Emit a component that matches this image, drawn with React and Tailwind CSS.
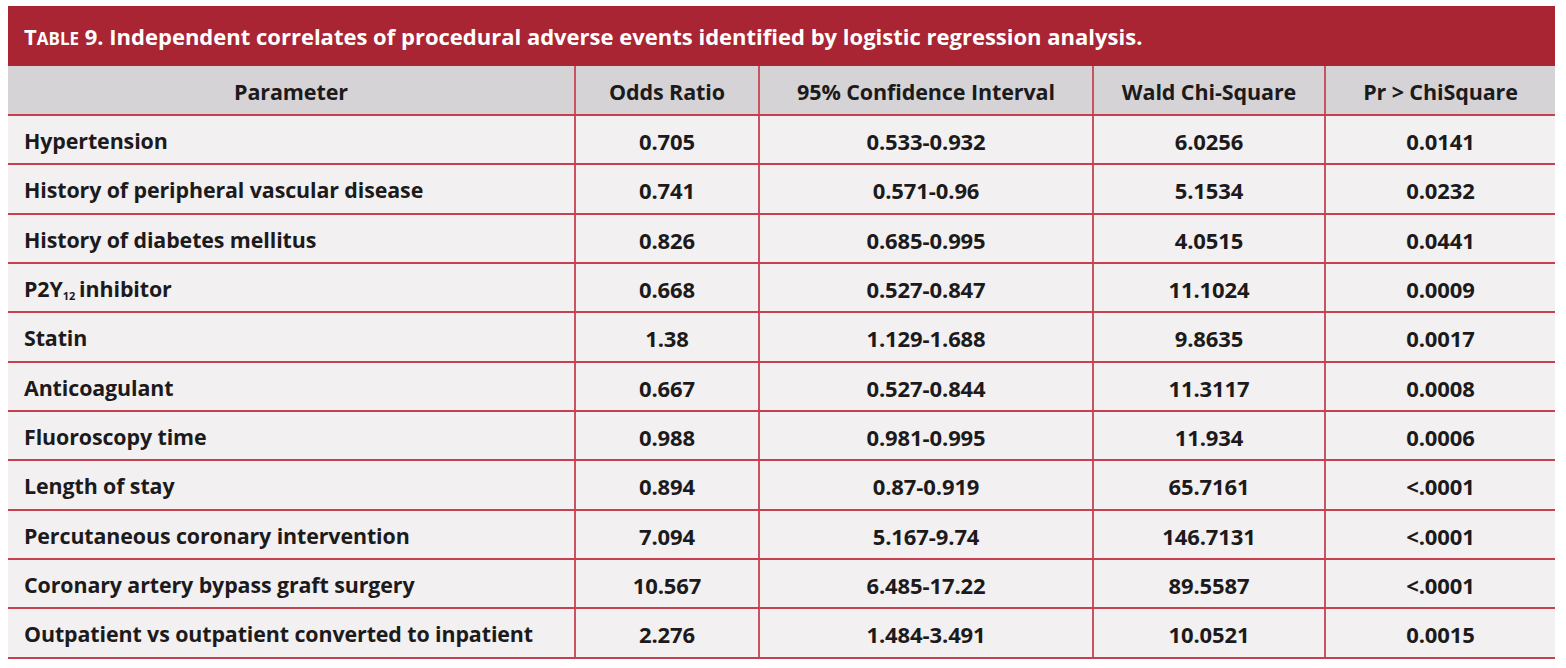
import React from "react";

const cols = "grid grid-cols-[568px_184px_334px_232px_229px]";

const rows = [
  ["Hypertension", "0.705", "0.533-0.932", "6.0256", "0.0141"],
  ["History of peripheral vascular disease", "0.741", "0.571-0.96", "5.1534", "0.0232"],
  ["History of diabetes mellitus", "0.826", "0.685-0.995", "4.0515", "0.0441"],
  ["P2Y12", "0.668", "0.527-0.847", "11.1024", "0.0009"],
  ["Statin", "1.38", "1.129-1.688", "9.8635", "0.0017"],
  ["Anticoagulant", "0.667", "0.527-0.844", "11.3117", "0.0008"],
  ["Fluoroscopy time", "0.988", "0.981-0.995", "11.934", "0.0006"],
  ["Length of stay", "0.894", "0.87-0.919", "65.7161", "<.0001"],
  ["Percutaneous coronary intervention", "7.094", "5.167-9.74", "146.7131", "<.0001"],
  ["Coronary artery bypass graft surgery", "10.567", "6.485-17.22", "89.5587", "<.0001"],
  ["Outpatient vs outpatient converted to inpatient", "2.276", "1.484-3.491", "10.0521", "0.0015"],
];

const heights = ["h-[49px]", "h-[50px]", "h-[49px]", "h-[49px]", "h-[50px]", "h-[49px]", "h-[49px]", "h-[50px]", "h-[49px]", "h-[49px]", "h-[50px]"];

const Param = ({ name }) => {
  if (name === "P2Y12") {
    return (
      <span>
        P2Y<sub className="text-[11px] relative top-[3px] mr-[4px]">12</sub>inhibitor
      </span>
    );
  }
  return <span>{name}</span>;
};

export default function App() {
  return (
    <div className="bg-white min-h-screen pt-[6px] pl-[8px] font-['Open_Sans','Liberation_Sans',sans-serif] text-[#1c1a1b]">
      <div className="w-[1547px]">
        <div className="h-[60px] bg-[#a92533] flex items-center pl-[16px] pt-[1px] text-white font-bold text-[22px]">
          <span>
            T<span className="text-[17px]">ABLE</span> 9. Independent correlates of procedural adverse events identified by logistic regression analysis.
          </span>
        </div>
        <div className={`${cols} h-[50px] bg-[#d5d3d6] border-b-2 border-[#c7404f] font-bold text-[21.5px] tracking-[-0.1px]`}>
          {["Parameter", "Odds Ratio", "95% Confidence Interval", "Wald Chi-Square", "Pr > ChiSquare"].map((h, i) => (
            <div
              key={h}
              className={`flex items-center justify-center pt-[4px] ${i < 4 ? "border-r-2 border-[#c95361]" : ""}`}
            >
              {h}
            </div>
          ))}
        </div>
        {rows.map((r, ri) => (
          <div
            key={ri}
            className={`${cols} ${heights[ri]} bg-[#f2f0f1] border-b-2 border-[#c7404f] font-bold tracking-[-0.1px]`}
          >
            {r.map((c, i) => (
              <div
                key={i}
                className={`flex items-center pt-[3px] ${i === 0 ? "pl-[16px] text-[21.4px]" : "justify-center text-[22px]"} ${i < 4 ? "border-r-2 border-[#c95361]" : ""}`}
              >
                {i === 0 ? <Param name={c} /> : c}
              </div>
            ))}
          </div>
        ))}
      </div>
    </div>
  );
}
